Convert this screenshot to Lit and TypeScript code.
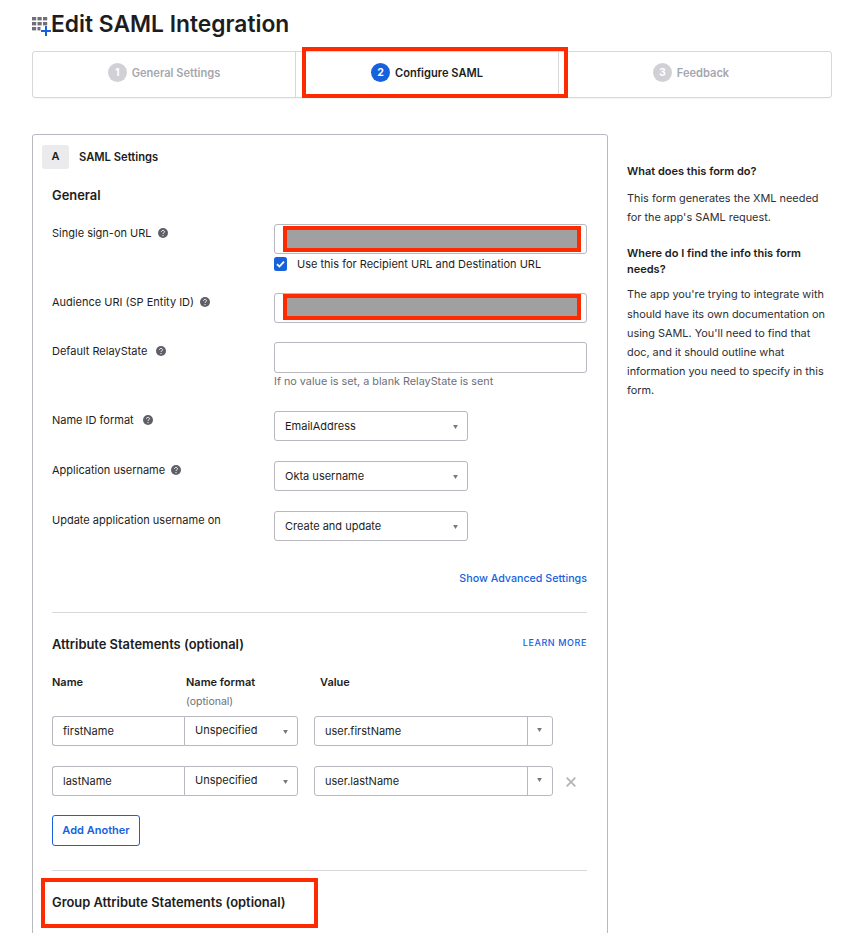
import { LitElement, html, css, nothing } from "lit";
import { customElement } from "lit/decorators.js";

const help = html`<svg class="help" viewBox="0 0 10 10" aria-hidden="true"><circle cx="5" cy="5" r="5" fill="#5f5f67"/><path d="M3.5 3.9c0-.9.7-1.5 1.5-1.5s1.5.5 1.5 1.3c0 1.2-1.5 1.1-1.5 2.2" fill="none" stroke="#fff" stroke-width="1"/><circle cx="5" cy="7.6" r=".65" fill="#fff"/></svg>`;

const caret = html`<svg class="caret" viewBox="0 0 6 5" aria-hidden="true"><path d="M0 0h6L3 5z" fill="#77777f"/></svg>`;

@customElement("app-root")
export class AppRoot extends LitElement {
  static styles = css`
    :host {
      display: block;
      position: relative;
      height: 933px;
      overflow: hidden;
      background: #fff;
      color: #1d1d21;
      font-family: Inter, "Noto Sans", sans-serif;
      font-size: 11px;
    }
    * { box-sizing: border-box; }
    .page { padding: 0 28px 0 32px; }
    .title-row { display: flex; align-items: center; height: 51px; padding-bottom: 3px; }
    .app-icon { width: 19px; height: 19px; flex: none; margin-top: 5px; }
    h1 { margin: 0; font-size: 22.8px; line-height: 26px; font-weight: 600; letter-spacing: 0; }
    .wizard { display: grid; grid-template-columns: 262px 263px 1fr; height: 47px; border: 1px solid #d7d7dc; border-radius: 3px; box-shadow: 0 1px 1px rgba(0,0,0,.04); }
    .step { display: flex; align-items: center; justify-content: center; gap: 5px; font-weight: 600; color: #a6a6ae; font-size: 11.1px; padding-bottom: 4px; }
    .step + .step { border-left: 1px solid #d7d7dc; }
    .step:last-child { padding-right: 8px; }
    .step.active { color: #1d1d21; }
    .num { width: 19px; height: 19px; border-radius: 50%; background: #d0d0d6; color: #fff; display: flex; align-items: center; justify-content: center; font-size: 10.5px; font-weight: 700; }
    .active .num { background: #1662dd; }
    .columns { display: grid; grid-template-columns: 576px 1fr; column-gap: 19px; margin-top: 36px; }
    .card { border: 1px solid #b8b8c0; border-radius: 3px 3px 0 0; padding: 0 20px 0 19px; height: 900px; }
    .card-head { display: flex; align-items: center; gap: 10px; margin: 10px 0 0 -10px; height: 24px; }
    .badge { width: 27px; height: 24px; border-radius: 3px; background: #ebebed; display: flex; align-items: center; justify-content: center; font-weight: 600; padding-bottom: 3px; }
    .card-head span { font-weight: 600; font-size: 11.2px; }
    h2 { margin: 0; font-size: 12.9px; line-height: 16px; font-weight: 600; }
    .general { margin-top: 19px; }
    .form-row { display: grid; grid-template-columns: 222px 313px; }
    .mt-20 { margin-top: 20px; }
    .mt-22 { margin-top: 22px; }
    .mt-19 { margin-top: 19px; }
    .label { display: flex; align-items: flex-start; gap: 6px; line-height: 18px; }
    .label.wide { gap: 9px; }
    .help { width: 10px; height: 10px; margin-top: 4px; flex: none; }
    .input { position: relative; display: block; height: 30px; border: 1px solid #b8b8c0; border-radius: 3px; background: #fff; }
    .input.tall { height: 31px; }
    .redact { position: absolute; left: 8px; right: 5px; height: 26px; background: #a0a0a0; border: 4px solid #ff2a00; }
    .redact.first { top: 1px; }
    .redact.second { top: 0; }
    .checkline { display: flex; align-items: center; gap: 10px; margin-top: 3px; height: 14px; padding-bottom: 1px; }
    .check { width: 13px; height: 14px; flex: none; margin-bottom: -1px; }
    .hint { color: #6e6e78; margin-top: 2px; line-height: 14px; font-size: 10.8px; }
    .select { position: relative; display: flex; align-items: center; height: 30px; width: 194px; border: 1px solid #b8b8c0; border-radius: 3px; padding: 0 0 0 10px; background: #fff; }
    .caret { position: absolute; right: 9px; top: 13px; width: 5px; height: 4px; }
    .adv-row { display: flex; justify-content: flex-end; margin-top: 31px; line-height: 14px; }
    .link { color: #1662dd; font-weight: 500; font-size: 10.7px; }
    hr { border: 0; border-top: 1px solid #d7d7dc; margin: 0; }
    .rule-a { margin-top: 26px; }
    .attr-head { display: flex; justify-content: space-between; align-items: center; margin-top: 24px; height: 16px; }
    .learn { color: #1662dd; font-size: 9px; font-weight: 500; letter-spacing: .6px; padding-bottom: 6px; }
    .attr-grid { display: grid; grid-template-columns: 132px 114px 16px 239px 34px; align-items: center; }
    .cols { margin-top: 22px; align-items: start; }
    .cols b { font-weight: 600; line-height: 14px; display: block; }
    .cols small { display: block; margin-top: 6px; font-size: 10.5px; color: #6e6e78; line-height: 14px; }
    .fmt-col { padding-left: 2px; }
    .value-col { padding-left: 6px; }
    .row-one { margin-top: 7px; }
    .row-two { margin-top: 20px; }
    .cell { height: 30px; border: 1px solid #b8b8c0; display: flex; align-items: center; background: #fff; padding-left: 10px; position: relative; }
    .name { border-radius: 3px 0 0 3px; border-right: 0; }
    .fmt { border-radius: 0 3px 3px 0; border-left: 1.5px solid #b8b8c0; padding-bottom: 3px; }
    .combo { border-radius: 3px; padding-left: 10px; }
    .combo i { position: absolute; right: 0; top: 0; bottom: 0; width: 25px; border-left: 1.5px solid #b8b8c0; }
    .combo .caret { right: 10px; top: 11px; }
    .remove { width: 10px; height: 10px; justify-self: center; margin: 2px 0 0 2px; }
    .add { display: inline-flex; align-items: center; justify-content: center; width: 88px; height: 31px; margin-top: 19px; border: 1px solid #1662dd; border-radius: 3px; color: #1662dd; font-weight: 600; padding-bottom: 2px; }
    .rule-b { margin-top: 24px; }
    .group-h { margin-top: 24px; }
    aside { padding-top: 29px; font-size: 10.9px; }
    aside h3 { margin: 0; font-size: 11px; line-height: 16px; font-weight: 600; }
    aside p { margin: 10px 0 0; line-height: 19.2px; color: #2e2e33; }
    aside h3.second { margin-top: 18px; }
    aside p.after { margin-top: 8px; }
    .frame { position: absolute; border: 4px solid #ff2a00; pointer-events: none; }
    .f-step { left: 302px; top: 47px; width: 266px; height: 51px; }
    .f-group { left: 41px; top: 878px; width: 277px; height: 50px; }
  `;

  private attrRow(name: string, value: string, removable: boolean, cls: string) {
    return html`<div class="attr-grid ${cls}">
      <div class="cell name">${name}</div>
      <div class="cell fmt">Unspecified${caret}</div>
      <div></div>
      <div class="cell combo">${value}<i></i>${caret}</div>
      ${removable
        ? html`<svg class="remove" viewBox="0 0 10 10" aria-hidden="true"><path d="M.7.7l8.6 8.6M9.3.7L.7 9.3" stroke="#b4b4bb" stroke-width="1.8"/></svg>`
        : nothing}
    </div>`;
  }

  render() {
    return html`
      <div class="page">
        <div class="title-row">
          <svg class="app-icon" viewBox="0 0 19 19" aria-hidden="true">
            <g fill="#6f6f77">
              <rect x="0" y="0" width="4.2" height="3.4"/><rect x="5.5" y="0" width="4.2" height="3.4"/><rect x="11" y="0" width="4.2" height="3.4"/>
              <rect x="0" y="5" width="4.2" height="3.4"/><rect x="5.5" y="5" width="4.2" height="3.4"/><rect x="11" y="5" width="4.2" height="3.4"/>
              <rect x="0" y="10" width="4.2" height="3.4"/><rect x="5.5" y="10" width="3" height="3.4"/>
            </g>
            <path d="M14 9v10M9 14h10" stroke="#1662dd" stroke-width="2"/>
          </svg>
          <h1>Edit SAML Integration</h1>
        </div>
        <div class="wizard">
          <div class="step"><span class="num">1</span>General Settings</div>
          <div class="step active"><span class="num">2</span>Configure SAML</div>
          <div class="step"><span class="num">3</span>Feedback</div>
        </div>
        <div class="columns">
          <section class="card">
            <div class="card-head"><div class="badge">A</div><span>SAML Settings</span></div>
            <h2 class="general">General</h2>
            <div class="form-row mt-20">
              <div class="label">Single sign-on URL ${help}</div>
              <div>
                <div class="input"><div class="redact first"></div></div>
                <label class="checkline">
                  <svg class="check" viewBox="0 0 13 14" aria-hidden="true"><rect width="13" height="14" rx="2.5" fill="#1662dd"/><path d="M3 7.2l2.4 2.4L10 4.6" fill="none" stroke="#fff" stroke-width="1.7"/></svg>
                  Use this for Recipient URL and Destination URL
                </label>
              </div>
            </div>
            <div class="form-row mt-22">
              <div class="label">Audience URI (SP Entity ID) ${help}</div>
              <div class="input"><div class="redact second"></div></div>
            </div>
            <div class="form-row mt-19">
              <div class="label wide">Default RelayState ${help}</div>
              <div>
                <div class="input tall"></div>
                <div class="hint">If no value is set, a blank RelayState is sent</div>
              </div>
            </div>
            <div class="form-row mt-22">
              <div class="label wide">Name ID format ${help}</div>
              <div class="select">EmailAddress${caret}</div>
            </div>
            <div class="form-row mt-20">
              <div class="label">Application username ${help}</div>
              <div class="select">Okta username${caret}</div>
            </div>
            <div class="form-row mt-20">
              <div class="label">Update application username on</div>
              <div class="select">Create and update${caret}</div>
            </div>
            <div class="adv-row"><span class="link">Show Advanced Settings</span></div>
            <hr class="rule-a" />
            <div class="attr-head"><h2>Attribute Statements (optional)</h2><span class="learn">LEARN MORE</span></div>
            <div class="attr-grid cols">
              <b>Name</b>
              <div class="fmt-col"><b>Name format</b><small>(optional)</small></div>
              <div></div>
              <b class="value-col">Value</b>
            </div>
            ${this.attrRow("firstName", "user.firstName", false, "row-one")}
            ${this.attrRow("lastName", "user.lastName", true, "row-two")}
            <span class="add">Add Another</span>
            <hr class="rule-b" />
            <h2 class="group-h">Group Attribute Statements (optional)</h2>
          </section>
          <aside>
            <h3>What does this form do?</h3>
            <p>This form generates the XML needed for the app's SAML request.</p>
            <h3 class="second">Where do I find the info this form needs?</h3>
            <p class="after">The app you're trying to integrate with should have its own documentation on using SAML. You'll need to find that doc, and it should outline what information you need to specify in this form.</p>
          </aside>
        </div>
      </div>
      <div class="frame f-step"></div>
      <div class="frame f-group"></div>
    `;
  }
}
